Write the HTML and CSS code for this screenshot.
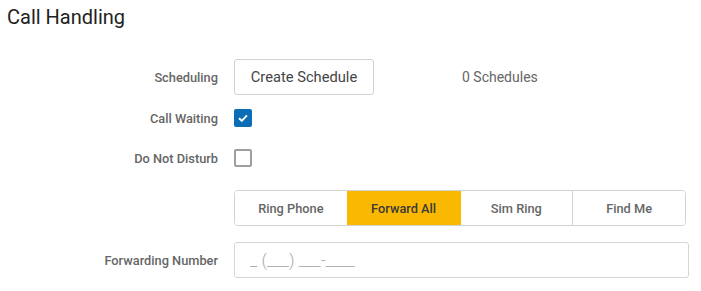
FILE: index.html
```html
<!doctype html>
<html>
<head>
 <title>Call Handling</title>
 <meta name=viewport content="width=device-width, initial-scale=1">
 <link rel="stylesheet" href="styles.css">
</head>
<body>
<h1 class=title>Call Handling</h1>
<div class=form>
  <div class="row row-sched">
    <label class=lbl>Scheduling</label>
    <div class=ctl>
      <button class=btn>Create Schedule</button>
      <span class=count>0 Schedules</span>
    </div>
  </div>
  <div class="row row-wait">
    <label class=lbl>Call Waiting</label>
    <div class=ctl>
      <span class="chk on">
        <svg width="10" height="8" viewBox="0 0 10 8"><path d="M1 4.2 L3.8 6.8 L9 1.4" fill="none" stroke="#fff" stroke-width="1.9"/></svg>
      </span>
    </div>
  </div>
  <div class="row row-dnd">
    <label class=lbl>Do Not Disturb</label>
    <div class=ctl><span class=chk></span></div>
  </div>
  <div class="row row-seg">
    <span class=lbl></span>
    <div class=seg>
      <button class=seg-btn>Ring Phone</button>
      <button class="seg-btn active">Forward All</button>
      <button class=seg-btn>Sim Ring</button>
      <button class=seg-btn>Find Me</button>
    </div>
  </div>
  <div class="row row-fwd">
    <label class=lbl>Forwarding Number</label>
    <input class=inp placeholder="_ (___) ___-____">
  </div>
</div>
</body>
</html>
```
FILE: styles.css
```css
  body, html {
    font-family: Roboto, "Liberation Sans", Arial, sans-serif;
    margin: 0;
    background: #fff;
    color: #333;
  }
  .title {
    font-size: 20px;
    font-weight: 400;
    color: #222;
    margin: 0;
    padding: 5px 0 0 7px;
    line-height: 24px;
  }
  .form { padding-top: 30px; }
  .row {
    display: grid;
    grid-template-columns: 218px auto;
    column-gap: 16px;
    align-items: center;
    height: 36px;
  }
  .row-wait { margin-top: 5px; }
  .row-dnd { margin-top: 4px; }
  .row-seg { margin-top: 14px; }
  .row-fwd { margin-top: 16px; }
  .lbl {
    text-align: right;
    font-size: 12.8px;
    font-weight: 500;
    color: #666;
  }
  .ctl {
    display: flex;
    align-items: center;
  }
  .btn {
    width: 140px;
    height: 36px;
    padding: 0;
    border: 1px solid #d2d2d2;
    border-radius: 3px;
    background-color: #fff;
    font-family: inherit;
    font-size: 14.7px;
    color: #444;
    outline: none;
  }
  .count {
    margin-left: 88px;
    font-size: 14px;
    color: #666;
  }
  .chk {
    box-sizing: border-box;
    width: 18px;
    height: 18px;
    border: 2px solid #9e9e9e;
    border-radius: 2px;
    display: flex;
    align-items: center;
    justify-content: center;
  }
  .chk.on {
    background: #0a6db5;
    border-color: #0a6db5;
  }
  .seg {
    display: flex;
    width: 452px;
    height: 36px;
    box-sizing: border-box;
    border: 1px solid #d2d2d2;
    border-radius: 4px;
    overflow: hidden;
  }
  .seg-btn {
    flex: 1;
    border: none;
    border-left: 1px solid #d2d2d2;
    background: #fff;
    font-family: inherit;
    font-size: 12.8px;
    font-weight: 500;
    color: #666;
    padding: 0;
    outline: none;
  }
  .seg-btn:first-child { border-left: none; }
  .seg-btn.active {
    background: #fab800;
    border-left-color: #fab800;
    color: #3a3a3a;
  }
  .seg-btn.active + .seg-btn { border-left-color: #fab800; }
  .inp {
    box-sizing: border-box;
    width: 455px;
    height: 36px;
    border: 1px solid #d6d6d6;
    border-radius: 3px;
    padding: 0 0 0 15px;
    font-family: inherit;
    font-size: 17px;
    font-weight: 300;
    outline: none;
  }
  .inp::placeholder { color: #a8a8a8; }
```
